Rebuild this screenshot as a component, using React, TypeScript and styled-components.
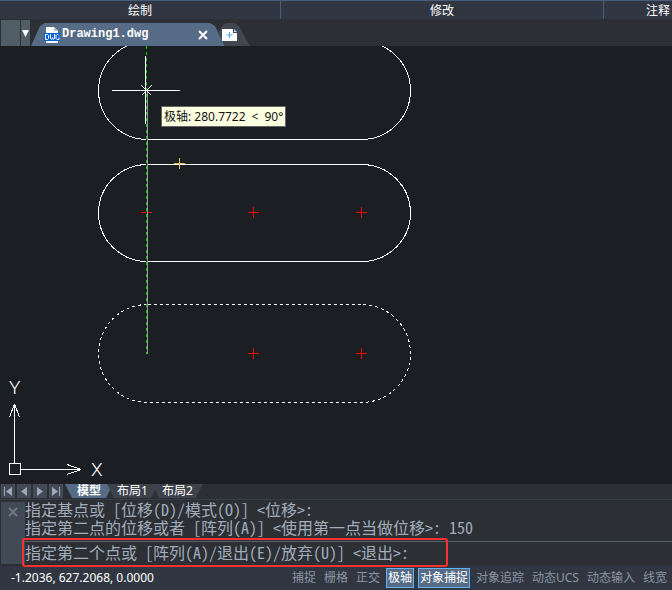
import React from "react";
import styled, { createGlobalStyle } from "styled-components";

const Global = createGlobalStyle`
  * { box-sizing: border-box; }
  body { margin: 0; background: #1b1e23; }
  button { font: inherit; color: inherit; border: 0; padding: 0; margin: 0; background: none; }
`;

const Window = styled.div`
  display: flex;
  flex-direction: column;
  height: 100vh;
  overflow: hidden;
  background: #2c2f34;
  font: 12px/16px "Noto Sans", "Noto Sans CJK SC", sans-serif;
  color: #fff;
`;

const Ribbon = styled.header`
  display: grid;
  grid-template-columns: 281fr 323fr 68fr;
  height: 19px;
  background: #313742;
  border-top: 1px solid #475d79;
`;

const RibbonPanel = styled.div<{ $last?: boolean }>`
  display: flex;
  align-items: center;
  justify-content: ${(p) => (p.$last ? "flex-end" : "center")};
  padding: 1px ${(p) => (p.$last ? 2 : 0)}px 0 0;
  white-space: nowrap;
  border-right: ${(p) => (p.$last ? "0" : "1px solid #475d79")};
`;

const FileBar = styled.nav`
  display: flex;
  height: 27px;
  padding: 1px 0 0 1px;
  background: #2c2f34;
`;

const BarSlot = styled.div`
  width: 19px;
  margin-right: 1px;
  background: #505d66;
`;

const ListButton = styled.button`
  width: 9px;
  background: #505d66;
  svg { display: block; margin: 0 auto; }
`;

const FileTab = styled.div`
  display: flex;
  align-items: center;
  height: 23px;
  width: 194px;
  margin: 3px 0 0 1px;
  padding: 0 17px 0 13px;
  background: #566b86;
  clip-path: polygon(0 100%, 9px 3px, 14px 0, 179px 0, 184px 3px, 100% 100%);
`;

const FileName = styled.button`
  flex: 1;
  display: flex;
  gap: 2px;
  font: bold 12px/14px "Liberation Mono", monospace;
  color: #fff;
`;

const CloseTab = styled.button`
  width: 10px;
  height: 10px;
  svg { display: block; }
`;

const NewTab = styled.button`
  display: flex;
  align-items: center;
  height: 23px;
  width: 32px;
  margin: 3px 0 0 -7px;
  padding-left: 4px;
  background: #42464f;
  clip-path: polygon(0 10px, 5px 2px, 9px 0, 16px 0, 21px 3px, 100% 100%, 7px 100%);
`;

const Canvas = styled.main`
  position: relative;
  flex: 1;
  min-height: 0;
  overflow: hidden;
  background: #1b1e23;
`;

const Drawing = styled.svg`
  display: block;
  shape-rendering: crispEdges;
  fill: none;
`;

const AxisIcon = styled.svg`
  position: absolute;
  left: 0;
  bottom: 0;
  fill: none;
  stroke: #fff;
  shape-rendering: crispEdges;
  text {
    font: 300 19px Roboto, sans-serif;
    fill: #fff;
    stroke: none;
  }
`;

const Tip = styled.div`
  position: absolute;
  left: 161px;
  top: 60px;
  display: flex;
  gap: 6px;
  height: 21px;
  padding: 0 2px;
  line-height: 19px;
  white-space: nowrap;
  color: #111;
  background: #ffffe1;
  border: 1px solid #646464;
`;

const LayoutBar = styled.nav`
  display: flex;
  height: 15px;
  padding-left: 1px;
  background: #2c2f34;
`;

const NavButton = styled.button`
  width: 14px;
  height: 14px;
  margin-right: 2px;
  background: #434955;
  svg { display: block; margin: 0 auto; }
`;

const LayoutTab = styled.button<{ $active?: boolean }>`
  height: 14px;
  width: ${(p) => (p.$active ? 48 : 51)}px;
  margin-right: -6px;
  line-height: 12px;
  text-align: center;
  white-space: nowrap;
  font-weight: ${(p) => (p.$active ? 700 : 400)};
  background: ${(p) => (p.$active ? "#566b86" : "#3d424b")};
  clip-path: polygon(0 0, 100% 0, calc(100% - 7px) 100%, 7px 100%);
`;

const CommandPanel = styled.section`
  position: relative;
  display: flex;
  height: 67px;
  padding: 0 0 2px 1px;
  border-top: 1px solid #363c48;
  background: #2c2f34;
`;

const CommandGrip = styled.div`
  width: 24px;
  margin-top: 2px;
  padding: 3px 0 0 7px;
  background: #434a57;
`;

const CommandText = styled.div`
  flex: 1;
  min-width: 0;
  font: 16px/18px "Noto Sans Mono CJK SC", "Noto Sans CJK SC", monospace;
  color: #a2adbc;
  white-space: nowrap;
`;

const HistoryLine = styled.div`
  height: 18px;
`;

const PromptLine = styled.div`
  display: flex;
  height: 24px;
  margin-top: 5px;
  border-top: 1px solid #59616a;
  line-height: 20px;
`;

const PromptInput = styled.input`
  flex: 1;
  min-width: 0;
  padding: 0 4px;
  border: 0;
  outline: 0;
  font: inherit;
  color: inherit;
  background: transparent;
`;

const Highlight = styled.div`
  position: absolute;
  left: 22px;
  top: 38px;
  width: 426px;
  height: 29px;
  border: 2px solid #fb3030;
  border-radius: 3px;
  pointer-events: none;
  z-index: 1;
`;

const StatusBar = styled.footer`
  display: flex;
  align-items: center;
  justify-content: space-between;
  height: 24px;
  padding: 0 3px 0 11px;
  background: #313742;
`;

const Modes = styled.div`
  display: flex;
  gap: 4px;
`;

const Mode = styled.button<{ $on?: boolean }>`
  height: 20px;
  padding: 0 1px;
  line-height: 18px;
  white-space: nowrap;
  border: 1px solid ${(p) => (p.$on ? "#62b5f5" : "transparent")};
  background: ${(p) => (p.$on ? "#566b86" : "transparent")};
  color: ${(p) => (p.$on ? "#fff" : "#8a94a2")};
`;

const Cross = ({ x, y }: { x: number; y: number }) => (
  <path d={`M${x - 5} ${y + 0.5}h11M${x + 0.5} ${y - 5}v11`} />
);

const slot = (top: number, height: number) => {
  const arc = `A49 ${height / 2} 0 0 1`;
  return `M147.5 ${top}.5H361.5${arc} 361.5 ${top + height}.5H147.5${arc} 147.5 ${top}.5Z`;
};

const navIcons = [
  { label: "第一个布局", d: "M2 3h1v9H2zM10 3v9L4 7.5z" },
  { label: "上一个布局", d: "M9 3v9L3 7.5z" },
  { label: "下一个布局", d: "M3 3v9l6-4.5z" },
  { label: "最后一个布局", d: "M9 3h1v9H9zM2 3v9l6-4.5z" },
];

const modes = [
  { label: "捕捉" },
  { label: "栅格" },
  { label: "正交" },
  { label: "极轴", on: true },
  { label: "对象捕捉", on: true },
  { label: "对象追踪" },
  { label: "动态UCS" },
  { label: "动态输入" },
  { label: "线宽" },
];

export default function App() {
  return (
    <Window>
      <Global />
      <Ribbon>
        <RibbonPanel>绘制</RibbonPanel>
        <RibbonPanel>修改</RibbonPanel>
        <RibbonPanel $last>注释</RibbonPanel>
      </Ribbon>
      <FileBar>
        <BarSlot />
        <ListButton aria-label="图纸列表">
          <svg width="7" height="7"><path d="M0 0h7L3.5 7z" fill="#fff" /></svg>
        </ListButton>
        <FileTab>
          <FileName>
            <svg width="16" height="16">
              <path d="M2 0h8l4 4v12H2z" fill="#fff" />
              <path d="M10 0v4h4z" fill="#b9bec5" />
              <path d="M0 6h16v8H0z" fill="#0a62d8" />
              <path d="M1.5 7.5v5h2l1-1v-3l-1-1zM6.5 7v4.500l1 1 1-2 1 2 1-1V7M15 8.500l-1-1h-1l-1 1v3l1 1h2v-2" fill="none" stroke="#fff" />
            </svg>
            Drawing1.dwg
          </FileName>
          <CloseTab aria-label="关闭图纸">
            <svg width="10" height="10"><path d="M1 1l8 8M9 1l-8 8" stroke="#fff" strokeWidth="2" /></svg>
          </CloseTab>
        </FileTab>
        <NewTab aria-label="新建图纸">
          <svg width="15" height="12">
            <path d="M0 0h11v4h4v8H0z" fill="#fff" />
            <path d="M12 0l3 3h-3z" fill="#b5dcf8" />
            <path d="M7.5 3v6M4.5 6h6" stroke="#4aa8ec" />
          </svg>
        </NewTab>
      </FileBar>
      <Canvas>
        <Drawing width="672" height="438" viewBox="0 46 672 438">
          <g stroke="#fff">
            <path d={slot(41, 98)} />
            <path d={slot(164, 97)} />
            <path d={slot(304, 98)} strokeDasharray="3 3" />
          </g>
          <g stroke="#f00">
            <Cross x={146} y={212} />
            <Cross x={253} y={212} />
            <Cross x={361} y={212} />
            <Cross x={253} y={353} />
            <Cross x={361} y={353} />
          </g>
          <path d="M147.5 90V354" stroke="#9a9a9a" />
          <path d="M146.5 46V354" stroke="#1b1e23" />
          <path d="M146.5 46V354" stroke="#00d000" strokeDasharray="3 3" />
          <path d="M112 90.5h68M145.5 56v68M141.5 85.5l10 10M151.5 85.5l-10 10" stroke="#fff" />
          <g stroke="#e6bd5c"><Cross x={179} y={163} /></g>
        </Drawing>
        <Tip role="tooltip">
          <span>极轴: 280.7722</span>
          <span>&lt;</span>
          <span>90°</span>
        </Tip>
        <AxisIcon width="110" height="110">
          <path d="M9.5 89.5h11v11h-11zM14.5 30v59M21 95.5h60M14.5 30l-5 13M14.5 30l5 13M81 95.5l-14-5M81 95.5l-14 5" />
          <text x="9" y="20">Y</text>
          <text x="91" y="102">X</text>
        </AxisIcon>
      </Canvas>
      <LayoutBar>
        {navIcons.map((n) => (
          <NavButton key={n.label} aria-label={n.label}>
            <svg width="12" height="14"><path d={n.d} fill="#9ca8b8" /></svg>
          </NavButton>
        ))}
        <LayoutTab $active>模型</LayoutTab>
        <LayoutTab>布局1</LayoutTab>
        <LayoutTab>布局2</LayoutTab>
      </LayoutBar>
      <CommandPanel>
        <CommandGrip>
          <CloseTab aria-label="关闭命令行">
            <svg width="10" height="10"><path d="M1 1l8 8M9 1l-8 8" stroke="#737880" strokeWidth="2" /></svg>
          </CloseTab>
        </CommandGrip>
        <CommandText>
          <HistoryLine>指定基点或 [位移(D)/模式(O)] &lt;位移&gt;:</HistoryLine>
          <HistoryLine>指定第二点的位移或者 [阵列(A)] &lt;使用第一点当做位移&gt;: 150</HistoryLine>
          <PromptLine>
            <label htmlFor="command">指定第二个点或 [阵列(A)/退出(E)/放弃(U)] &lt;退出&gt;:</label>
            <PromptInput id="command" type="text" />
          </PromptLine>
        </CommandText>
        <Highlight />
      </CommandPanel>
      <StatusBar>
        <span>-1.2036, 627.2068, 0.0000</span>
        <Modes>
          {modes.map((m) => (
            <Mode key={m.label} $on={m.on} aria-pressed={!!m.on}>{m.label}</Mode>
          ))}
        </Modes>
      </StatusBar>
    </Window>
  );
}
